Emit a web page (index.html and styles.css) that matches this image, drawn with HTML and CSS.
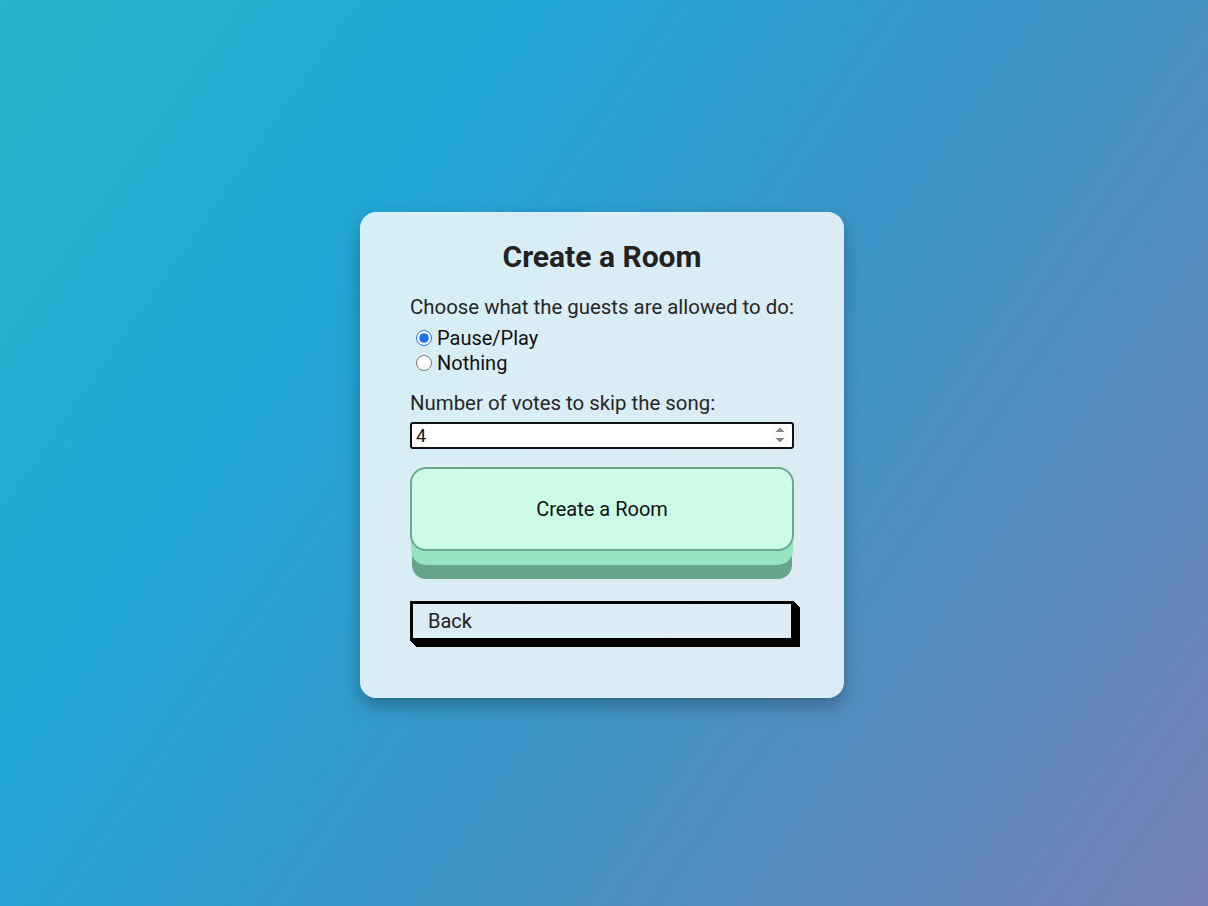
FILE: index.html
```html
<!DOCTYPE html>
<html lang="en">
<head>
<meta charset="utf-8">
<title>Create a Room</title>
<link rel="stylesheet" href="styles.css">
</head>
<body>
<main class="page">
  <section class="card">
    <h1 class="title">Create a Room</h1>
    <p class="label">Choose what the guests are allowed to do:</p>
    <div class="radios">
      <label class="radio"><input type="radio" name="perm" checked><span>Pause/Play</span></label>
      <label class="radio"><input type="radio" name="perm"><span>Nothing</span></label>
    </div>
    <label class="label votes-label" for="votes">Number of votes to skip the song:</label>
    <input class="votes" id="votes" type="number" value="4" min="1" autofocus>
    <button class="create-btn" type="button">Create a Room</button>
    <button class="back-btn" type="button">Back</button>
  </section>
</main>
</body>
</html>
```
FILE: styles.css
```css
* { box-sizing: border-box; }
html, body { margin: 0; height: 100%; }
body {
  font-family: Roboto, "Noto Sans", Arial, sans-serif;
  background: linear-gradient(125deg, #27b3cb 0%, #22a6d6 30%, #3a96c9 55%, #7681b6 100%);
  color: #222;
}
.page {
  height: 100%;
  display: flex;
  align-items: center;
  justify-content: center;
}
.card {
  width: 484px;
  height: 486px;
  padding: 27px 50px 0;
  margin: 3px 4px 0 0;
  border-radius: 16px;
  background: rgba(255, 255, 255, 0.82);
  box-shadow: 0 8px 18px rgba(0, 0, 0, 0.28);
  display: flex;
  flex-direction: column;
}
.title {
  margin: 0;
  font-size: 30px;
  line-height: 35px;
  font-weight: 700;
  text-align: center;
  color: #222;
}
.label {
  margin: 22px 0 0;
  font-size: 20.4px;
  line-height: 23px;
  color: #262626;
  display: block;
  white-space: nowrap;
}
.radios {
  display: flex;
  flex-direction: column;
  margin-top: 7px;
  padding-left: 6px;
}
.radio {
  display: flex;
  align-items: center;
  height: 25px;
  font-size: 20px;
  color: #111;
}
.radio input {
  width: 16px;
  height: 16px;
  margin: 0 5px 0 0;
  accent-color: #1a73e8;
}
.votes-label { margin-top: 16px; }
.votes {
  margin-top: 7px;
  width: 100%;
  height: 27px;
  border: 2px solid #111;
  border-radius: 3px;
  padding: 0 4px;
  font-family: Roboto, Arial, sans-serif;
  font-size: 18px;
  color: #111;
  background: #fff;
  outline: none;
}
.create-btn {
  margin-top: 18px;
  height: 84px;
  width: 100%;
  border: 2px solid #6aa88c;
  border-radius: 16px;
  background: #ccfbe7;
  font-family: Roboto, Arial, sans-serif;
  font-size: 20px;
  color: #111;
  box-shadow: 0 15px 0 -1px #95e5c3, 0 30px 0 -2px #68a489;
  cursor: pointer;
}
.back-btn {
  margin-top: 50px;
  height: 40px;
  width: 384px;
  border: 3px solid #000;
  border-radius: 0;
  background: transparent;
  text-align: left;
  padding: 0 0 0 15px;
  font-family: Roboto, Arial, sans-serif;
  font-size: 20px;
  color: #222;
  box-shadow: 1px 1px 0 #000, 2px 2px 0 #000, 3px 3px 0 #000, 4px 4px 0 #000, 5px 5px 0 #000, 6px 6px 0 #000;
  cursor: pointer;
}
```
